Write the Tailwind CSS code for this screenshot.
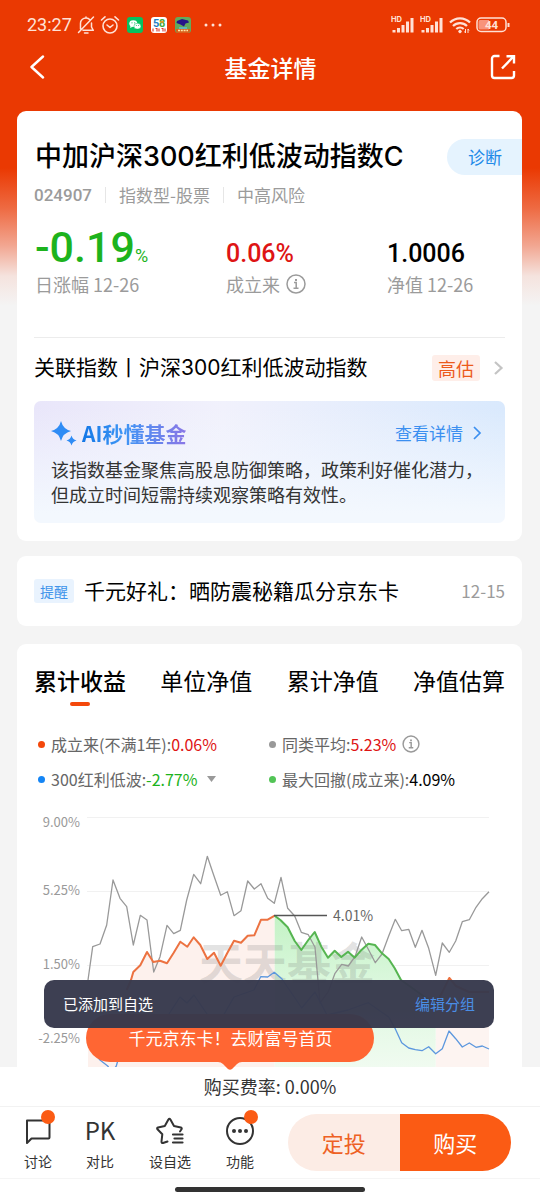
<!DOCTYPE html>
<html lang="zh-CN">
<head>
<meta charset="utf-8">
<meta name="viewport" content="width=device-width, initial-scale=1">
<title>基金详情</title>
<script src="https://cdn.jsdelivr.net/npm/@tailwindcss/browser@4"></script>
</head>
<body class="font-['Noto_Sans_CJK_SC',sans-serif] text-black">
<div class="flex h-screen flex-col overflow-hidden bg-[#f4f4f4] bg-[linear-gradient(to_bottom,#ea3902_0px,#ea3902_168px,#ee6a42_208px,#f2a792_246px,#f5e3de_276px,#f4f4f4_306px)]">

  <!-- status bar -->
  <div class="flex h-12 shrink-0 items-center justify-between pt-0.5 pr-[30px] pl-[27px] text-[#ffe1d6]">
    <div class="flex items-center gap-[5px]">
      <span class="font-['Roboto',sans-serif] text-lg leading-6">23:27</span>
      <svg class="h-5 w-[18px]" viewBox="0 0 18 20" fill="none" stroke="currentColor" stroke-width="1.5" stroke-linecap="round" stroke-linejoin="round"><path d="M3.500 14V8.500a5.500 5.500 0 0 1 9.500-3.800M14.500 8V12l1.800 3.300H6M9 2V3M7.500 18h3.500M1.500 17.500 16.500 2"/></svg>
      <svg class="h-5 w-5" viewBox="0 0 20 20" fill="none" stroke="currentColor" stroke-width="1.6" stroke-linecap="round" stroke-linejoin="round"><circle cx="10" cy="11" r="7"/><path d="M1.500 5 5 1.800M18.500 5 15 1.800M7 10l3 2.500 3-2.500"/></svg>
      <svg class="ml-0.5 h-4 w-4" viewBox="0 0 16 16"><rect width="16" height="16" rx="3" fill="#07c160"/><ellipse cx="6.300" cy="6.600" rx="4" ry="3.400" fill="#fff"/><path d="M3.500 8.500 3.200 11l2.300-1.300z" fill="#fff"/><ellipse cx="10.400" cy="9.200" rx="3.500" ry="2.900" fill="#fff" stroke="#07c160" stroke-width=".5"/><g fill="#07c160"><circle cx="5" cy="5.800" r=".6"/><circle cx="7.700" cy="5.800" r=".6"/><circle cx="9.300" cy="8.500" r=".5"/><circle cx="11.600" cy="8.500" r=".5"/></g></svg>
      <svg class="ml-[3px] h-4 w-4" viewBox="0 0 16 16"><rect width="16" height="16" rx="3" fill="#fff"/><g font-family="Roboto" font-weight="700" font-size="11"><text x="2" y="10" fill="#1f7fc4">5</text><text x="8" y="10" fill="#43a83c">8</text></g><path d="M9.500 5.500q1.500-2 3 0" stroke="#f0a020" fill="none" stroke-width="1.500"/><path d="M2 11.500v3M4.500 11.500h1.500v3M8 11.500v3M10.500 11.500h1.500v3M14 11.500v3" stroke="#d8382a" stroke-width="1.100" fill="none"/></svg>
      <svg class="ml-[3px] h-4 w-4" viewBox="0 0 16 16"><rect width="16" height="16" rx="3" fill="#63a95c"/><path d="M2 4 7 2l6 1.500 1 2-3.500 1L9 9.500 5.500 7.500 1.500 6z" fill="#26148a"/><path d="M4 10h8v2H4z" fill="#5fb7bb"/><path d="M1 12h14v1.500A2.500 2.500 0 0 1 12.500 16h-9A2.500 2.500 0 0 1 1 13.500z" fill="#d9601c"/><path d="M3 13.500h10" stroke="#ffe9a8" stroke-width="1.300" stroke-dasharray="2 .8"/></svg>
      <svg class="ml-2 h-1 w-[18px]" viewBox="0 0 18 4" fill="currentColor"><circle cx="2" cy="2" r="1.500"/><circle cx="9" cy="2" r="1.500"/><circle cx="16" cy="2" r="1.500"/></svg>
    </div>
    <div class="flex items-center gap-[5px]">
      <svg class="h-[18px] w-6" viewBox="0 0 24 18"><text x="0" y="6" font-family="Inter" font-weight="700" font-size="7.500" fill="currentColor">HD</text><path d="M3 16.500v-2.500M7.500 16.500v-4.500M12 16.500V9M16.500 16.500V5.500M21 16.500V2" stroke="currentColor" stroke-width="3"/></svg>
      <svg class="h-[18px] w-6" viewBox="0 0 24 18"><text x="0" y="6" font-family="Inter" font-weight="700" font-size="7.500" fill="currentColor">HD</text><path d="M3 16.500v-2.500M7.500 16.500v-4.500M12 16.500V9M16.500 16.500V5.500M21 16.500V2" stroke="currentColor" stroke-width="3"/></svg>
      <svg class="h-[18px] w-[22px]" viewBox="0 0 22 18" fill="none" stroke="currentColor" stroke-width="2.200"><path d="M1 6.500a14 14 0 0 1 20 0M4 10a10 10 0 0 1 14 0M7.300 13a5.500 5.500 0 0 1 7.400 0"/><circle cx="11" cy="15.500" r="1.300" fill="currentColor" stroke-width="1"/><path d="M16.500 13v4M19 13v4M15.500 15.500l1 1.500M20 14.500 19 13" stroke-width="1"/></svg>
      <svg class="h-4 w-[34px]" viewBox="0 0 34 16"><rect x="1" y="1" width="29" height="13.500" rx="4" fill="none" stroke="currentColor" stroke-width="1.500"/><path d="M4 3h9v9.500H4a1.500 1.500 0 0 1-1.500-1.500V4.500A1.500 1.500 0 0 1 4 3z" fill="#f8937a"/><path d="M32.500 6v4" stroke="currentColor" stroke-width="2"/><text x="15.500" y="12" text-anchor="middle" font-family="Roboto" font-weight="700" font-size="11.500" fill="currentColor">44</text></svg>
    </div>
  </div>

  <!-- navigation bar -->
  <header class="flex h-[38px] shrink-0 items-center justify-between pr-6 pl-[27px] text-white">
    <button type="button" aria-label="返回" class="flex w-6 items-center"><svg class="h-6 w-5" viewBox="0 0 20 24" fill="none" stroke="currentColor" stroke-width="2.400" stroke-linecap="round" stroke-linejoin="round"><path d="M16 1.500 4.500 12 16 22.500"/></svg></button>
    <h1 class="text-[23px] leading-8 font-medium">基金详情</h1>
    <button type="button" aria-label="分享" class="flex"><svg class="h-[26px] w-[26px]" viewBox="0 0 26 26" fill="none" stroke="currentColor" stroke-width="2.400"><path d="M9.500 2H4.500A2.500 2.500 0 0 0 2 4.500v17A2.500 2.500 0 0 0 4.500 24h17a2.500 2.500 0 0 0 2.500-2.500V17M16.500 2.200H24V9.500M23.500 2.500 12 14.500"/></svg></button>
  </header>

  <main class="mt-[25px] min-h-0 flex-1 overflow-y-auto pr-[18px] pl-[17px] [scrollbar-width:none]">
    <!-- fund summary -->
    <section class="rounded-[9px] bg-white pt-7 pb-[18px]">
      <div class="flex items-center justify-between pl-[18px]">
        <h2 class="font-['Inter','Noto_Sans_CJK_SC',sans-serif] text-[27px] leading-9 font-medium whitespace-nowrap">中加沪深300红利低波动指数C</h2>
        <button type="button" class="h-9 rounded-l-full bg-[#e5f3fe] pr-5 pl-[21px] text-[17px] text-[#2089e8]">诊断</button>
      </div>
      <div class="mt-2 flex items-center gap-[13px] pl-[17px] text-[17px] leading-6 text-[#9b9b9b]">
        <span class="font-['Roboto',sans-serif] font-medium">024907</span>
        <span class="h-4 w-px bg-[#e6e6e6]"></span>
        <span>指数型-股票</span>
        <span class="h-4 w-px bg-[#e6e6e6]"></span>
        <span>中高风险</span>
      </div>
      <dl class="mt-[18px] grid grid-cols-[191fr_161fr_117fr] items-end px-[18px]">
        <div class="flex flex-col-reverse">
          <dt class="text-lg leading-6 whitespace-nowrap text-[#9b9b9b]">日涨幅 12-26</dt>
          <dd class="flex items-baseline pb-[3px] font-['Roboto',sans-serif] text-[43px] leading-[44px] font-medium text-[#1db31d]">-0.19<span class="text-lg leading-5 font-normal">%</span></dd>
        </div>
        <div class="flex flex-col-reverse">
          <dt class="flex items-center gap-[6px] text-lg leading-6 text-[#9b9b9b]">成立来
            <svg class="h-5 w-5" viewBox="0 0 20 20" fill="none" stroke="currentColor" stroke-width="1.500"><circle cx="10" cy="10" r="9"/><path d="M8 8.500h2.200V14M7.500 14.200h5" /><path d="M10 5v2" stroke-width="2"/></svg>
          </dt>
          <dd class="font-['Roboto',sans-serif] text-[25px] leading-[36px] font-medium text-[#de1414]">0.06%</dd>
        </div>
        <div class="flex flex-col-reverse">
          <dt class="text-lg leading-6 whitespace-nowrap text-[#9b9b9b]">净值 12-26</dt>
          <dd class="font-['Roboto',sans-serif] text-[25px] leading-[36px] font-medium">1.0006</dd>
        </div>
      </dl>
      <div class="px-[17px] pt-[41px]">
        <a href="#index" class="flex h-16 items-center border-t border-[#ececec] pb-1">
          <span class="font-['Inter','Noto_Sans_CJK_SC',sans-serif] text-[21px] leading-8 whitespace-nowrap">关联指数丨沪深300红利低波动指数</span>
          <span class="ml-auto rounded-[3px] bg-[#feeee9] px-[6px] text-lg leading-[26px] text-[#ec5a1c]">高估</span>
          <svg class="ml-[13px] h-4 w-3" viewBox="0 0 12 16" fill="none" stroke="#c4c4c4" stroke-width="2.200"><path d="m2 2 6.500 6L2 14"/></svg>
        </a>
        <div class="rounded-[7px] bg-[linear-gradient(to_bottom,transparent_5%,#f3f8fe_92%),linear-gradient(to_right,#e9e6fa_0%,#f1f1fc_40%,#d9e9fd_100%)] px-[17px] pt-4 pb-4">
          <div class="flex items-center">
            <svg class="h-[26px] w-[26px]" viewBox="0 0 26 26" fill="#2f8cf5"><path d="M10 1q2 8 10 10-8 2-10 10Q8 13 0 11 8 9 10 1z"/><path d="M20.500 15.500q1 4 5 5-4 1-5 5-1-4-5-5 4-1 5-5z"/></svg>
            <h3 class="ml-[5px] bg-[linear-gradient(to_right,#1277e6,#3d95f5_40%,#8a77e6)] bg-clip-text text-[21px] leading-8 font-bold text-transparent">AI秒懂基金</h3>
            <a href="#ai" class="mr-1 ml-auto flex items-center gap-[9px] text-[17px] leading-8 text-[#3b8ff0]">查看详情
              <svg class="h-[14px] w-3" viewBox="0 0 12 14" fill="none" stroke="currentColor" stroke-width="1.700"><path d="m2 1 6 6-6 6"/></svg>
            </a>
          </div>
          <p class="mt-2 text-lg leading-[25px] text-[#333]"><span class="whitespace-nowrap">该指数基金聚焦高股息防御策略，政策利好催化潜力，</span><br>但成立时间短需持续观察策略有效性。</p>
        </div>
      </div>
    </section>

    <!-- reminder -->
    <a href="#notice" class="mt-[15px] flex h-[70px] items-center rounded-[9px] bg-white px-[17px]">
      <span class="rounded-[3px] bg-[#e9f3fe] px-[6px] text-sm leading-6 text-[#3f93ea]">提醒</span>
      <span class="ml-[10px] text-[21px] whitespace-nowrap">千元好礼：晒防震秘籍瓜分京东卡</span>
      <time class="ml-auto text-[17px] text-[#9b9b9b]">12-15</time>
    </a>

    <!-- performance -->
    <section class="mt-[18px] rounded-t-[9px] bg-white pt-5">
      <div role="tablist" class="flex justify-between px-[17px] text-[23px] leading-8 whitespace-nowrap">
        <button type="button" role="tab" aria-selected="true" class="flex flex-col items-center font-medium">累计收益<span class="mt-[6px] h-1 w-5 rounded-full bg-[#f4480b]"></span></button>
        <button type="button" role="tab" aria-selected="false" class="self-start">单位净值</button>
        <button type="button" role="tab" aria-selected="false" class="self-start">累计净值</button>
        <button type="button" role="tab" aria-selected="false" class="self-start">净值估算</button>
      </div>
      <div class="mt-[26px] grid grid-cols-[231fr_253fr] gap-y-[11px] pl-[21px] text-base leading-6 whitespace-nowrap text-[#666]">
        <div class="flex items-center"><span class="mr-[6px] h-[7px] w-[7px] rounded-full bg-[#f4480b]"></span>成立来(不满1年):<span class="text-[#de1414]">0.06%</span></div>
        <div class="flex items-center"><span class="mr-[6px] h-[7px] w-[7px] rounded-full bg-[#999]"></span>同类平均:<span class="text-[#de1414]">5.23%</span>
          <svg class="ml-[6px] h-[18px] w-[18px]" viewBox="0 0 20 20" fill="none" stroke="#999" stroke-width="1.600"><circle cx="10" cy="10" r="8.800"/><path d="M8 8.500h2.200V14M7.500 14.200h5"/><path d="M10 5v2" stroke-width="2"/></svg></div>
        <button type="button" class="flex items-center"><span class="mr-[6px] h-[7px] w-[7px] rounded-full bg-[#1485f5]"></span>300红利低波:<span class="text-[#1db31d]">-2.77%</span>
          <svg class="ml-[10px] h-[6px] w-[9px]" viewBox="0 0 9 6" fill="#999"><path d="M0 0h9L4.500 6z"/></svg></button>
        <div class="flex items-center"><span class="mr-[6px] h-[7px] w-[7px] rounded-full bg-[#52c456]"></span>最大回撤(成立来):<span class="text-black">4.09%</span></div>
      </div>
      <!-- cumulative return chart -->
      <svg class="mt-[9px] w-full" viewBox="17 800 505 280" fill="none" stroke-linejoin="round" role="img" aria-label="累计收益走势">
        <path d="M87 817.500H489M87 891.500H489M87 965.500H489M87 1039.500H489" stroke="#f1f1f1"/>
        <path d="M88 1040 100 1028 113 1010 126.700 990 131 980 133.300 972 140.300 965.300 147 952 153.300 962 160 960.700 167 963.300 173.700 952.700 180.300 941.700 187.300 946.700 193.700 937.300 200.300 945 207.300 959 214 952.700 220.700 965.700 227.300 953 234 940.700 241 942.700 247.700 935.700 254.300 935.300 261 919.700 267.700 919.700 274.700 915.700V1080H88z" fill="#fdf1ed"/>
        <path d="M435.700 1005 442.300 992 449.300 977 456 986 469 992 489 992V1080H435.700z" fill="#fdf4f1"/>
        <path d="M274.700 915.700 280.700 920.300 287.700 927.300 294.700 941 301.300 950 308.300 940 314.700 932 321.300 946.700 328 957.700 334.700 950.700 341.300 957 348 951.700 354.700 957.700 361.700 949.700 368.300 943.700 375 945 382 953.300 388.700 959 394.700 968.300 401 980 415 990 435.700 1005V1080H274.700z" fill="url(#drawdown)"/>
        <defs><linearGradient id="drawdown" x1="0" y1="915" x2="0" y2="1070" gradientUnits="userSpaceOnUse"><stop offset="0" stop-color="#c3f2c5"/><stop offset=".4" stop-color="#d9f7db"/><stop offset="1" stop-color="#f1fbf1"/></linearGradient></defs>
        <text x="199" y="980" font-size="44" font-weight="700" fill="#6b6b6b" fill-opacity=".2" font-family="Noto Sans CJK SC">天天基金</text>
        <path d="M88 980 92.700 946.700 100 944 106.700 925 113 880 120 898.300 126.700 906.700 133.300 945 140.300 915.300 147 920 153.700 972 160 956.700 167 925.300 173.700 933.700 180.300 930.300 186.700 900 193.700 874.300 200.700 883.700 207.300 856.300 214 876 220.700 895.300 227.300 891.700 234 915.700 241 910.700 247.700 881 254.300 889 261 883.700 267.700 898.300 274.300 903.300 281 877.300 287.700 908.300 294.700 916 301.300 932.300 308.300 934.700 315 947.300 320 1003 328.300 991.700 335 973.300 341.700 964.300 348.300 966 355 956.700 361.700 937 368.300 949.300 375.300 962.700 382 954 388.700 936 395.300 919.300 401.700 930.700 408.700 929.300 415.300 947.300 422 930.300 428.700 948.300 435.700 975.300 442.300 943 449.300 952.300 455.700 941 462.300 921.700 469.300 919.700 476 907.300 482.300 898.700 489 891.700" stroke="#999" stroke-width="1.300"/>
        <path d="M88 1045 100 1060 107.700 1066 112 1072 116.300 1066 118 1060 133 1035 167 1017 180 997 187 1003 194 995 207 1014 220.700 1020 234 997 254 990 260.700 976.700 267.700 977 274.300 972.300 282 979 301.700 1008 315 992 327 1015 348 1010 368.300 1002.700 388.700 1017 395 1028.300 401.700 1042.700 408.700 1048 415.300 1049.700 422 1050.700 428.700 1046.700 435.700 1053.700 442.300 1048.700 449 1031 455.700 1038.700 462.300 1047 469.300 1043 476 1047.300 482.300 1046 489 1049" stroke="#5c97de" stroke-width="1.300"/>
        <path d="M126.700 990 131 980 133.300 972 140.300 965.300 147 952 153.300 962 160 960.700 167 963.300 173.700 952.700 180.300 941.700 187.300 946.700 193.700 937.300 200.300 945 207.300 959 214 952.700 220.700 965.700 227.300 953 234 940.700 241 942.700 247.700 935.700 254.300 935.300 261 919.700 267.700 919.700 274.700 915.700M435.700 1005 442.300 992 449.300 978 456 986 469 992 489 992" stroke="#ec7241" stroke-width="2"/>
        <path d="M274.700 915.700 280.700 920.300 287.700 927.300 294.700 941 301.300 950 308.300 940 314.700 932 321.300 946.700 328 957.700 334.700 950.700 341.300 957 348 951.700 354.700 957.700 361.700 949.700 368.300 943.700 375 945 382 953.300 388.700 959 394.700 968.300 401 980 415 990 435.700 1005" stroke="#56b551" stroke-width="2"/>
        <path d="M274 915.500H327" stroke="#555" stroke-width="1.300"/>
        <g font-family="Noto Sans CJK SC" fill="#999" font-size="13" text-anchor="end">
          <text x="80" y="827">9.00%</text>
          <text x="80" y="895">5.25%</text>
          <text x="80" y="969">1.50%</text>
          <text x="80" y="1043">-2.25%</text>
        </g>
        <text x="333" y="921" font-family="Noto Sans CJK SC" font-size="14" fill="#666">4.01%</text>
      </svg>
    </section>
  </main>

  <!-- action area -->
  <footer class="relative shrink-0 bg-white">
    <a href="#gift" class="absolute bottom-full left-[16%] mb-[5px] flex h-12 w-72 items-center justify-center rounded-full bg-[#ff6633] text-[17px] text-white">千元京东卡！去财富号首页
      <svg class="absolute top-full left-1/2 h-2 w-6 -translate-x-1/2" viewBox="0 0 24 8" fill="#ff6633"><path d="M0 0h24q-3 0-5 2l-5 5q-2 1.500-4 0L5 2Q3 0 0 0z"/></svg>
    </a>
    <div role="status" class="absolute inset-x-0 bottom-full mr-[46px] mb-[39px] ml-11 flex h-12 items-center justify-between rounded-[10px] bg-[#37394c]/97 px-[19px] text-[15px] text-white">
      <span>已添加到自选</span>
      <a href="#group" class="text-[#4a8ee6]">编辑分组</a>
    </div>
    <p class="border-b border-[#f2f2f2] text-center text-lg leading-[39px] text-[#333]">购买费率: 0.00%</p>
    <div class="flex h-[72px] items-center border-b border-[#f5f5f5] pr-[29px] text-[#333]">
      <nav class="flex flex-1 text-sm leading-5">
        <a href="#discuss" class="relative flex w-[76px] flex-col items-center gap-[5px]">
          <svg class="h-8 w-8" viewBox="0 0 32 32" fill="none" stroke="currentColor" stroke-width="2" stroke-linejoin="round"><path d="M5 6.500h21.500q1 0 1 1V23.500q0 1-1 1H9.500L5 29z"/></svg>讨论
          <span class="absolute -top-1 right-[21px] h-[14px] w-[14px] rounded-full bg-[#fb5b14]"></span>
        </a>
        <a href="#compare" class="flex w-12 flex-col items-center gap-[5px]">
          <span class="h-8 text-2xl leading-8">PK</span>对比
        </a>
        <a href="#watch" class="flex w-[92px] flex-col items-center gap-[5px]">
          <svg class="h-8 w-8" viewBox="0 0 32 32" fill="none" stroke="currentColor" stroke-width="2" stroke-linejoin="round" stroke-linecap="round"><path d="M13.500 27.500 9 29q-1.500.3-1.500-1.500l.8-7.200-4.800-5q-1-1.200.5-1.800l6.800-1.500 3.600-6.500q1-1.400 2 0l3.600 6.500 6.800 1.500q1.500.6.700 1.800L26 17.500"/><path d="M19 20.500h9.500M20.500 24.500h8M19 28.500h9.500" stroke-width="2.200"/></svg>设自选
        </a>
        <a href="#tools" class="relative flex w-12 flex-col items-center gap-[5px]">
          <svg class="h-8 w-8" viewBox="0 0 32 32" fill="none" stroke="currentColor" stroke-width="2"><circle cx="16" cy="17" r="13"/><g fill="currentColor" stroke="none"><circle cx="10" cy="17" r="2"/><circle cx="16" cy="17" r="2"/><circle cx="22" cy="17" r="2"/></g></svg>功能
          <span class="absolute -top-1 right-[6px] h-[14px] w-[14px] rounded-full bg-[#fb5b14]"></span>
        </a>
      </nav>
      <div class="flex h-[57px] w-[223px] overflow-hidden rounded-full text-[22px]">
        <button type="button" class="flex-1 bg-[#fcece5] text-[#ee6124]">定投</button>
        <button type="button" class="flex-1 bg-[#fb5b14] text-white">购买</button>
      </div>
    </div>
    <div class="mx-auto mt-2 mb-2 h-[5px] w-[190px] rounded-full bg-[#333]"></div>
  </footer>
</div>
</body>
</html>
